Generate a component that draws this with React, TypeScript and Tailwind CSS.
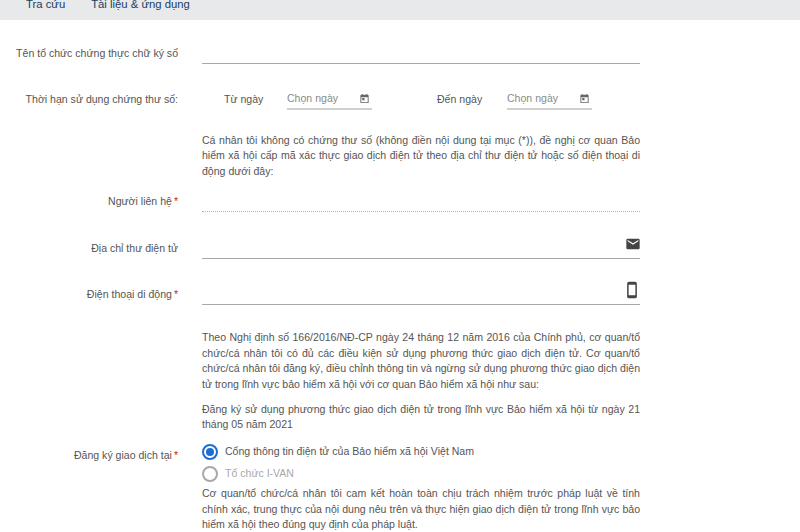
import React from "react";

const font = { fontFamily: '"Liberation Sans", Arial, sans-serif' };

function Label({ children, req }: { children: React.ReactNode; req?: boolean }) {
  return (
    <div className="w-[178px] shrink-0 pt-[4px] text-right text-[#555]">
      {children}
      {req && <span className="ml-[2px] text-[#c62828]">*</span>}
    </div>
  );
}

function DateField() {
  return (
    <div className="flex h-[19px] w-[85px] items-start justify-between border-b-2 border-[#d0d0d0] text-[#8a8a8a]">
      <span className="leading-[15px]">Chọn ngày</span>
      <svg width="11" height="11" viewBox="0 0 24 24" className="mr-[2px] mt-[2px]" fill="#666">
        <path d="M19 4h-1V2h-2v2H8V2H6v2H5a2 2 0 0 0-2 2v14a2 2 0 0 0 2 2h14a2 2 0 0 0 2-2V6a2 2 0 0 0-2-2zm0 16H5V9h14v11zM7 11h5v5H7z" />
      </svg>
    </div>
  );
}

function InputLine({ icon, dotted }: { icon?: React.ReactNode; dotted?: boolean }) {
  return (
    <div
      className={
        "flex h-[22px] w-[438px] items-start justify-end " +
        (dotted ? "border-b border-dotted border-[#b5b5b5]" : "border-b border-[#a8a8a8]")
      }
    >
      {icon}
    </div>
  );
}

export default function App() {
  return (
    <div style={font} className="h-[532px] w-[800px] overflow-hidden bg-white text-[10.55px] leading-[15.7px] text-[#555]">
      <div className="flex h-[20px] items-start gap-[26px] bg-[#e8e9eb] pl-[26px] text-[11.3px] leading-[9px] text-[#22405f]">
        <span>Tra cứu</span>
        <span>Tài liệu &amp; ứng dụng</span>
      </div>

      <div className="mt-[22px] flex items-start gap-[24px]">
        <Label>Tên tổ chức chứng thực chữ ký số</Label>
        <InputLine />
      </div>

      <div className="mt-[27px] flex items-start gap-[24px]">
        <Label>
          <span className="relative top-[-3px]">Thời hạn sử dụng chứng thư số:</span>
        </Label>
        <div className="flex items-start">
          <span className="ml-[22px] w-[63px] pt-[1px]">Từ ngày</span>
          <DateField />
          <span className="ml-[65px] w-[70px] pt-[1px]">Đến ngày</span>
          <DateField />
        </div>
      </div>

      <div className="mt-[22px] ml-[202px] w-[438px] text-justify">
        Cá nhân tôi không có chứng thư số (không điền nội dung tại mục (*)), đề nghị cơ quan Bảo hiểm xã hội cấp mã xác thực giao dịch điện tử theo địa chỉ thư điện tử hoặc số điện thoại di động dưới đây:
      </div>

      <div className="mt-[10px] flex items-start gap-[24px]">
        <Label req>Người liên hệ</Label>
        <InputLine dotted />
      </div>

      <div className="mt-[25px] flex items-start gap-[24px]">
        <Label>Địa chỉ thư điện tử</Label>
        <InputLine
          icon={
            <svg width="16" height="16" viewBox="0 0 24 24" fill="#444" className="mt-[-1px] mr-[-1px]">
              <path d="M20 4H4a2 2 0 0 0-2 2v12a2 2 0 0 0 2 2h16a2 2 0 0 0 2-2V6a2 2 0 0 0-2-2zm0 4l-8 5-8-5V6l8 5 8-5v2z" />
            </svg>
          }
        />
      </div>

      <div className="mt-[24px] flex items-start gap-[24px]">
        <Label req>Điện thoại di động</Label>
        <InputLine
          icon={
            <svg width="18" height="18" viewBox="0 0 24 24" fill="#444" className="mt-[-2px] mr-[-1px]">
              <path d="M16 1H8a2.5 2.5 0 0 0-2.5 2.5v17A2.5 2.5 0 0 0 8 23h8a2.5 2.5 0 0 0 2.5-2.5v-17A2.5 2.5 0 0 0 16 1zm.5 18h-9V5h9v14z" />
            </svg>
          }
        />
      </div>

      <div className="mt-[25px] ml-[202px] w-[438px] text-justify">
        Theo Nghị định số 166/2016/NĐ-CP ngày 24 tháng 12 năm 2016 của Chính phủ, cơ quan/tổ chức/cá nhân tôi có đủ các điều kiện sử dụng phương thức giao dịch điện tử. Cơ quan/tổ chức/cá nhân tôi đăng ký, điều chỉnh thông tin và ngừng sử dụng phương thức giao dịch điện tử trong lĩnh vực bảo hiểm xã hội với cơ quan Bảo hiểm xã hội như sau:
      </div>

      <div className="mt-[9px] ml-[202px] w-[438px] text-justify">
        Đăng ký sử dụng phương thức giao dịch điện tử trong lĩnh vực Bảo hiểm xã hội từ ngày 21 tháng 05 năm 2021
      </div>

      <div className="mt-[11px] flex items-start gap-[24px]">
        <Label req>Đăng ký giao dịch tại</Label>
        <div className="w-[438px]">
          <div className="flex items-center gap-[7px]">
            <span className="flex h-[16px] w-[16px] items-center justify-center rounded-full border-2 border-[#1a6fd0]">
              <span className="h-[8px] w-[8px] rounded-full bg-[#1a6fd0]" />
            </span>
            <span>Cổng thông tin điện tử của Bảo hiểm xã hội Việt Nam</span>
          </div>
          <div className="mt-[6px] flex items-center gap-[7px] text-[#a8a8a8]">
            <span className="h-[16px] w-[16px] rounded-full border-2 border-[#a8a8a8]" />
            <span>Tổ chức I-VAN</span>
          </div>
          <div className="mt-[4px] text-justify">
            Cơ quan/tổ chức/cá nhân tôi cam kết hoàn toàn chịu trách nhiệm trước pháp luật về tính chính xác, trung thực của nội dung nêu trên và thực hiện giao dịch điện tử trong lĩnh vực bảo hiểm xã hội theo đúng quy định của pháp luật.
          </div>
        </div>
      </div>
    </div>
  );
}
